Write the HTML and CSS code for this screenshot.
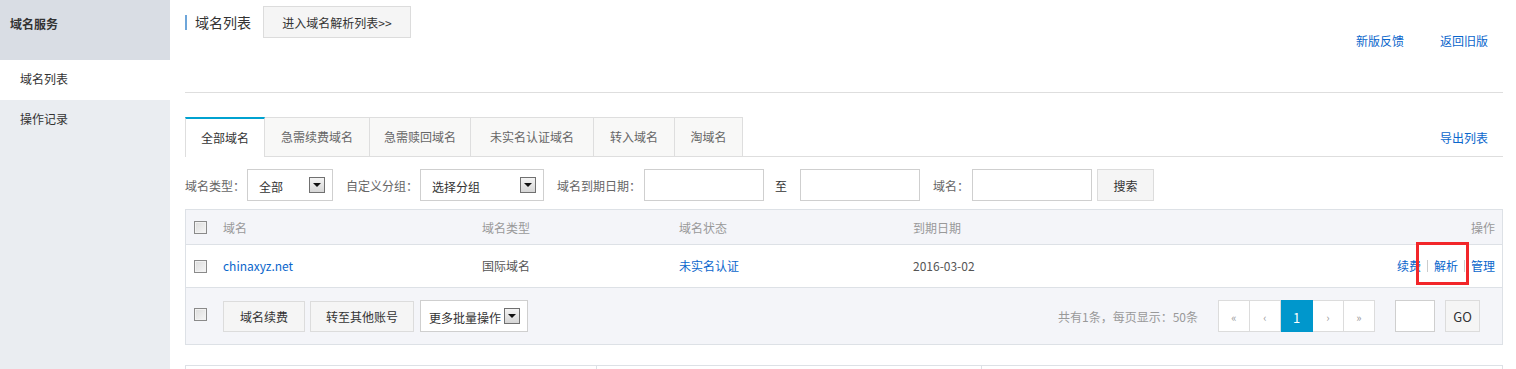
FILE: index.html
```html
<!DOCTYPE html>
<html lang="zh-CN">
<head>
<meta charset="utf-8">
<title>域名列表</title>
<link rel="stylesheet" href="styles.css">
</head>
<body>
<div class="layout">
  <aside class="sidebar">
    <div class="side-title">域名服务</div>
    <a class="side-item active">域名列表</a>
    <a class="side-item">操作记录</a>
  </aside>
  <main class="main">
    <div class="head">
      <div class="head-left">
        <h1 class="title">域名列表</h1>
        <button class="btn btn-head">进入域名解析列表&gt;&gt;</button>
      </div>
      <div class="head-links">
        <a class="link">新版反馈</a>
        <a class="link">返回旧版</a>
      </div>
    </div>

    <div class="tabs">
      <ul class="tab-list">
        <li class="tab active">全部域名</li>
        <li class="tab">急需续费域名</li>
        <li class="tab">急需赎回域名</li>
        <li class="tab">未实名认证域名</li>
        <li class="tab">转入域名</li>
        <li class="tab">淘域名</li>
      </ul>
      <a class="link export">导出列表</a>
    </div>

    <div class="filters">
      <span class="f-label">域名类型：</span>
      <div class="select sel-type"><span>全部</span><i class="arrow"></i></div>
      <span class="f-label gap">自定义分组：</span>
      <div class="select sel-group"><span>选择分组</span><i class="arrow"></i></div>
      <span class="f-label gap">域名到期日期：</span>
      <input class="input date" type="text">
      <span class="f-label to">至</span>
      <input class="input date to-input" type="text">
      <span class="f-label gap">域名：</span>
      <input class="input date" type="text">
      <button class="btn btn-search">搜索</button>
    </div>

    <div class="table">
      <div class="row head-row">
        <div class="cell chk"><span class="checkbox"></span></div>
        <div class="cell">域名</div>
        <div class="cell">域名类型</div>
        <div class="cell">域名状态</div>
        <div class="cell">到期日期</div>
        <div class="cell ops">操作</div>
      </div>
      <div class="row body-row">
        <div class="cell chk"><span class="checkbox"></span></div>
        <div class="cell"><a class="link">chinaxyz.net</a></div>
        <div class="cell">国际域名</div>
        <div class="cell"><a class="link">未实名认证</a></div>
        <div class="cell">2016-03-02</div>
        <div class="cell ops">
          <a class="link">续费</a><span class="sep"></span><a class="link hl">解析</a><span class="sep"></span><a class="link">管理</a>
        </div>
      </div>
      <div class="foot-row">
        <div class="cell chk"><span class="checkbox"></span></div>
        <div class="foot-actions">
          <button class="btn btn-foot">域名续费</button>
          <button class="btn btn-foot move">转至其他账号</button>
          <div class="select sel-batch"><span>更多批量操作</span><i class="arrow"></i></div>
        </div>
        <div class="pager-area">
          <span class="total">共有1条，每页显示：50条</span>
          <div class="pager">
            <span class="pg">«</span>
            <span class="pg">‹</span>
            <span class="pg current">1</span>
            <span class="pg">›</span>
            <span class="pg">»</span>
          </div>
          <input class="input page-input" type="text">
          <button class="btn btn-go">GO</button>
        </div>
      </div>
    </div>

    <div class="bottom-box">
      <div class="bcell c1"></div>
      <div class="bcell c2"></div>
      <div class="bcell c3"></div>
    </div>
  </main>
</div>
</body>
</html>
```
FILE: styles.css
```css
html, body {
  margin: 0;
  padding: 0;
}
body {
  font-family: "Noto Sans CJK SC", "Noto Sans", sans-serif;
  font-size: 12px;
  color: #333;
  background: #fff;
  overflow: hidden;
}
.layout {
  display: flex;
  min-height: 369px;
}
.sidebar {
  width: 170px;
  flex: none;
  background: #eaedf1;
}
.side-title {
  height: 60px;
  box-sizing: border-box;
  padding: 16px 0 0 10px;
  line-height: 16px;
  font-weight: bold;
  color: #333;
  background: #d9dde4;
}
.side-item {
  display: block;
  height: 40px;
  line-height: 38px;
  padding-left: 20px;
  color: #333;
}
.side-item.active {
  background: #fff;
}

.main {
  flex: none;
  width: 1318px;
  margin-left: 15px;
}
.link {
  color: #0a66cc;
  text-decoration: none;
  cursor: pointer;
}

.head {
  height: 92px;
  border-bottom: 1px solid #dedede;
  display: flex;
  justify-content: space-between;
  align-items: flex-start;
}
.head-left {
  display: flex;
  align-items: center;
  padding-top: 6px;
}
.title {
  margin: 0;
  font-size: 14px;
  font-weight: normal;
  color: #333;
  line-height: 15px;
  border-left: 2px solid #6ea6da;
  padding-left: 8px;
  width: 56px;
}
.btn {
  font-family: inherit;
  font-size: 12px;
  color: #333;
  background: #f5f5f5;
  border: 1px solid #dcdcdc;
  box-sizing: border-box;
  height: 32px;
  padding: 0 16px;
  margin: 0;
  cursor: pointer;
}
.btn-head {
  margin-left: 12px;
  width: 148px;
  padding: 0;
}
.head-links {
  display: flex;
  gap: 36px;
  padding: 34px 15px 0 0;
  line-height: 14px;
}

.tabs {
  margin-top: 24px;
  height: 39px;
  border-bottom: 1px solid #dedede;
  display: flex;
  justify-content: space-between;
  align-items: flex-start;
}
.tab-list {
  list-style: none;
  margin: 0;
  padding: 0;
  display: flex;
  align-items: flex-start;
}
.tab {
  height: 39px;
  box-sizing: border-box;
  border: 1px solid #dedede;
  border-left: none;
  border-bottom: none;
  background: #f8f8f7;
  color: #666;
  line-height: 38px;
  padding: 0 16px;
}
.tab:nth-child(2) { width: 105px; text-align: center; padding: 0; }
.tab:nth-child(3) { width: 101px; text-align: center; padding: 0; }
.tab:nth-child(4) { width: 123px; text-align: center; padding: 0; }
.tab:nth-child(5) { width: 81px; text-align: center; padding: 0; }
.tab:nth-child(6) { width: 68px; text-align: center; padding: 0; }
.tab.active {
  width: 80px;
  padding: 0;
  text-align: center;
  height: 40px;
  background: #fff;
  color: #333;
  border-left: 1px solid #dedede;
  border-top: 2px solid #00a2d0;
  line-height: 37px;
}
.export {
  align-self: center;
  padding-right: 15px;
  padding-top: 2px;
}

.filters {
  margin-top: 12px;
  display: flex;
  align-items: center;
  height: 32px;
}
.f-label {
  color: #666;
  white-space: nowrap;
}
.f-label.gap { margin-left: 13px; }
.f-label.to { margin-left: 11px; color: #333; }
.select {
  box-sizing: border-box;
  height: 32px;
  border: 1px solid #cfcfcf;
  background: #fff;
  display: flex;
  align-items: center;
  justify-content: space-between;
  color: #333;
  padding: 3px 7px 0 11px;
}
.sel-type { width: 86px; margin-left: 2px; }
.sel-group { width: 124px; margin-left: 2px; }
.arrow {
  width: 16px;
  height: 16px;
  box-sizing: border-box;
  border: 1px solid #707070;
  background: linear-gradient(#f4f4f4, #d6d6d6);
  position: relative;
  margin-top: -3px;
  flex: none;
}
.arrow::after {
  content: "";
  position: absolute;
  left: 3px;
  top: 5px;
  border-left: 4px solid transparent;
  border-right: 4px solid transparent;
  border-top: 4px solid #111;
}
.input {
  box-sizing: border-box;
  height: 32px;
  border: 1px solid #cfcfcf;
  background: #fff;
  margin: 0;
  padding: 0 6px;
  font-family: inherit;
  outline: none;
}
.date {
  width: 120px;
  margin-left: 3px;
}
.to-input { margin-left: 13px; }
.btn-search {
  width: 57px;
  padding: 0;
  margin-left: 5px;
}

.table {
  margin-top: 8px;
  border: 1px solid #dde1e6;
}
.row {
  display: grid;
  grid-template-columns: 37px 259px 197px 234px 1fr auto;
  align-items: center;
  border-bottom: 1px solid #dde1e6;
}
.head-row {
  height: 34px;
  background: #f4f5f9;
  color: #999;
}
.body-row {
  height: 42px;
  background: #fff;
  color: #555;
  line-height: 20px;
}
.chk {
  padding-left: 8px;
  display: flex;
  align-items: center;
}
.checkbox {
  width: 13px;
  height: 13px;
  box-sizing: border-box;
  border: 1px solid #8a8a8a;
  background: linear-gradient(135deg, #dcdcdc, #f6f6f6);
  box-shadow: inset 0 0 0 1px #f2f2f2;
  display: inline-block;
}
.ops {
  padding-right: 7px;
  text-align: right;
  display: flex;
  align-items: center;
}
.sep {
  display: inline-block;
  width: 1px;
  height: 12px;
  background: #ccc;
  margin: 0 6px;
}
.hl {
  position: relative;
}
.hl::after {
  content: "";
  position: absolute;
  left: -18px;
  right: -11px;
  top: -14px;
  bottom: -9px;
  border: 3px solid #f2262a;
}

.foot-row {
  height: 56px;
  background: #f4f5f9;
  display: flex;
  align-items: center;
}
.foot-row .chk {
  width: 37px;
  box-sizing: border-box;
  flex: none;
  margin-top: -4px;
}
.foot-actions {
  display: flex;
  align-items: center;
}
.btn-foot {
  width: 82px;
  padding: 0;
  height: 31px;
}
.btn-foot.move {
  width: 104px;
  margin-left: 5px;
}
.sel-batch {
  width: 108px;
  margin-left: 6px;
  padding: 3px 7px 0 8px;
}
.pager-area {
  margin-left: auto;
  display: flex;
  align-items: center;
  padding-right: 22px;
}
.total {
  color: #999;
  margin-right: 20px;
}
.pager {
  display: flex;
}
.pg {
  width: 31px;
  height: 32px;
  box-sizing: border-box;
  border: 1px solid #dcdcdc;
  border-left: none;
  background: #fff;
  color: #999;
  display: flex;
  align-items: center;
  justify-content: center;
  font-size: 11px;
  padding-top: 2px;
}
.pg:first-child {
  width: 32px;
  border-left: 1px solid #dcdcdc;
}
.pg.current {
  width: 32px;
  background: #0097cc;
  border-color: #0097cc;
  color: #fff;
  font-size: 13px;
}
.page-input {
  width: 40px;
  margin-left: 20px;
  border-color: #cfcfcf;
}
.btn-go {
  width: 35px;
  padding: 0;
  margin-left: 10px;
  font-size: 13px;
}

.bottom-box {
  margin-top: 20px;
  height: 40px;
  border: 1px solid #dde1e6;
  display: grid;
  grid-template-columns: 411px 385px 1fr;
}
.bcell {
  border-right: 1px solid #dde1e6;
}
.bcell.c3 { border-right: none; }
```
